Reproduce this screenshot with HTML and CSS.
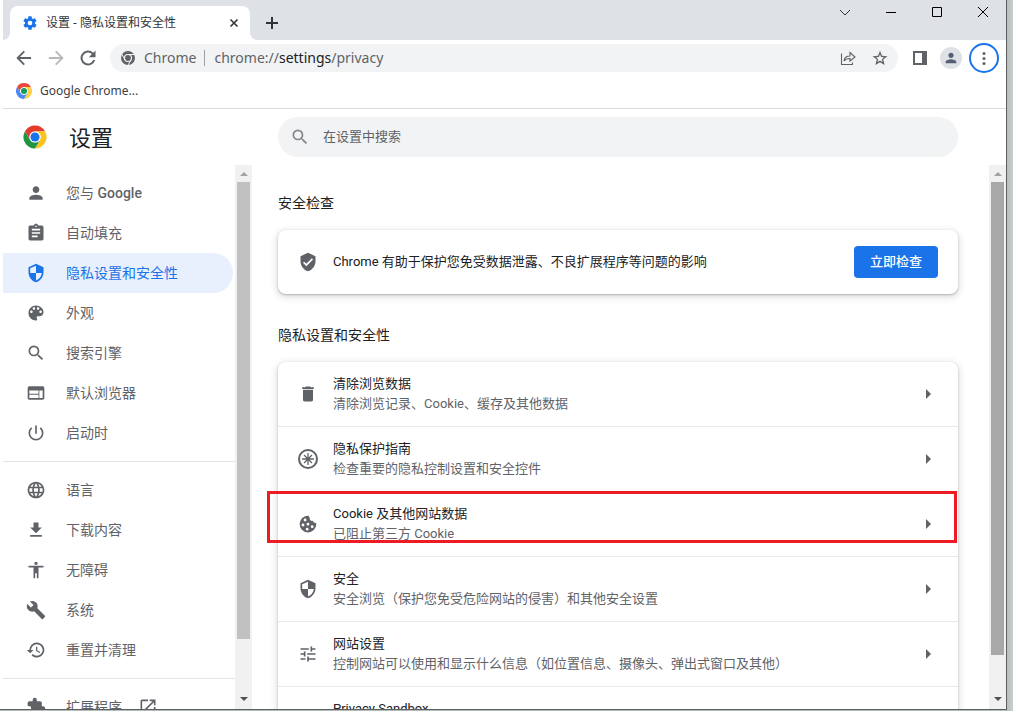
FILE: index.html
```html
<!DOCTYPE html>
<html lang="zh-CN">
<head>
<meta charset="utf-8">
<title>设置 - 隐私设置和安全性</title>
<link rel="stylesheet" href="styles.css">
</head>
<body>
<svg class="defs" aria-hidden="true">
  <symbol id="chrome-logo" viewBox="-1 -1 50 50">
    <circle cx="24" cy="24" r="23" fill="#fff"/>
    <path fill="#e33b2e" d="M24 12h20.8A24 24 0 0 0 3.2 12l10.4 18A12 12 0 0 1 24 12z"/>
    <path fill="#fcc31e" d="M34.4 30L24 48A24 24 0 0 0 44.800 12H24a12 12 0 0 1 10.400 18z"/>
    <path fill="#229342" d="M13.600 30L3.200 12A24 24 0 0 0 24 48l10.400-18a12 12 0 0 1-20.800 0z"/>
    <circle cx="24" cy="24" r="9.500" fill="#1a73e8"/>
  </symbol>
  <symbol id="chrome-page" viewBox="0 0 48 48">
    <circle cx="24" cy="24" r="23" fill="#fff"/>
    <path fill="#ea4a3c" d="M24 12h20.800A24 24 0 0 0 3.200 12l10.400 18A12 12 0 0 1 24 12z"/>
    <path fill="#fdd04a" d="M34.400 30L24 48A24 24 0 0 0 44.800 12H24a12 12 0 0 1 10.400 18z"/>
    <path fill="#4a8af4" d="M13.600 30L3.200 12A24 24 0 0 0 24 48l10.400-18a12 12 0 0 1-20.800 0z"/>
    <circle cx="24" cy="24" r="9" fill="#0f9d58"/>
  </symbol>
  <symbol id="person" viewBox="0 0 24 24"><path d="M12 12c2.210 0 4-1.790 4-4s-1.790-4-4-4-4 1.790-4 4 1.790 4 4 4zm0 2c-2.670 0-8 1.340-8 4v2h16v-2c0-2.660-5.330-4-8-4z"/></symbol>
  <symbol id="shield" viewBox="0 0 24 24"><path d="M12 1L3 5v6c0 5.550 3.840 10.740 9 12 5.160-1.260 9-6.450 9-12V5l-9-4zm0 10.990h7c-.53 4.120-3.280 7.790-7 8.940V12H5V6.300l7-3.110v8.800z"/></symbol>
  <symbol id="search" viewBox="0 0 24 24"><path d="M15.500 14h-.79l-.28-.27A6.470 6.470 0 0 0 16 9.500 6.500 6.500 0 1 0 9.500 16c1.610 0 3.090-.59 4.230-1.570l.27.28v.79l5 4.990L20.490 19l-4.990-5zm-6 0C7.010 14 5 11.990 5 9.500S7.010 5 9.500 5 14 7.010 14 9.500 11.990 14 9.500 14z"/></symbol>
  <symbol id="arrow" viewBox="0 0 6 10"><path d="M0 0l5 5-5 5z"/></symbol>
</svg>
<div class="window">
  <header class="tabstrip">
    <div class="tab">
      <svg class="icon16 blue" viewBox="0 0 24 24"><path d="M19.430 12.980c.04-.32.07-.64.07-.98s-.03-.66-.07-.98l2.110-1.650a.5.5 0 0 0 .12-.64l-2-3.460a.5.5 0 0 0-.61-.22l-2.490 1a7.300 7.300 0 0 0-1.690-.98l-.38-2.650A.49.49 0 0 0 14 2h-4a.49.49 0 0 0-.49.42l-.38 2.650c-.61.25-1.170.59-1.690.98l-2.490-1a.5.5 0 0 0-.61.22l-2 3.460a.5.5 0 0 0 .12.64l2.110 1.650c-.04.32-.07.65-.07.98s.03.66.07.98l-2.110 1.650a.5.5 0 0 0-.12.640l2 3.460c.12.22.39.3.61.22l2.490-1c.52.4 1.080.73 1.690.98l.38 2.650c.03.24.24.42.49.42h4c.25 0 .46-.18.49-.42l.38-2.650a7.300 7.300 0 0 0 1.690-.98l2.490 1c.23.09.49 0 .61-.22l2-3.460a.5.5 0 0 0-.12-.64l-2.110-1.650zM12 15.500a3.500 3.500 0 1 1 0-7 3.500 3.500 0 0 1 0 7z"/></svg>
      <span class="tab-title">设置 - 隐私设置和安全性</span>
      <button class="plain" aria-label="关闭标签页"><svg class="icon12" viewBox="0 0 12 12"><path class="line medium-line" d="M2.500 2.500l7 7m0-7l-7 7"/></svg></button>
    </div>
    <button class="plain newtab" aria-label="新标签页"><svg class="icon12" viewBox="0 0 12 12"><path class="line thick" d="M6 0v12M0 6h12"/></svg></button>
    <div class="controls">
      <button class="plain" aria-label="搜索标签页"><svg class="icon12" viewBox="0 0 12 12"><path class="line" d="M1 4l5 5 5-5"/></svg></button>
      <button class="plain" aria-label="最小化"><svg class="icon12" viewBox="0 0 12 12"><path class="line black" d="M1 6.500h10"/></svg></button>
      <button class="plain" aria-label="最大化"><svg class="icon12" viewBox="0 0 12 12"><path class="line black" d="M1.500 1.500h9v9h-9z"/></svg></button>
      <button class="plain" aria-label="关闭"><svg class="icon12" viewBox="0 0 12 12"><path class="line black" d="M1 1l10 10m0-10L1 11"/></svg></button>
    </div>
  </header>

  <div class="toolbar">
    <button class="plain" aria-label="后退"><svg class="icon20" viewBox="0 0 24 24"><path d="M20.500 10.800H7.200l5.900-5.900L11.500 3.300 2.800 12l8.700 8.700 1.600-1.600-5.900-5.900h13.300z"/></svg></button>
    <button class="plain faint" aria-label="前进"><svg class="icon20" viewBox="0 0 24 24"><path d="M3.500 10.800h13.300l-5.900-5.900 1.600-1.600 8.700 8.700-8.700 8.700-1.600-1.600 5.900-5.900H3.500z"/></svg></button>
    <button class="plain" aria-label="重新加载"><svg class="icon20" viewBox="0 0 24 24"><path d="M18.400 5.600A9 9 0 1 0 20.700 14.500h-2.500a6.600 6.600 0 1 1-1.500-7.200L13 11h8V3z"/></svg></button>
    <div class="omnibox">
      <svg class="icon16" viewBox="0 0 48 48"><circle cx="24" cy="24" r="21"/><circle cx="24" cy="24" r="10.500" fill="none" stroke="#f1f3f4" stroke-width="3.500"/><path fill="none" stroke="#f1f3f4" stroke-width="3" d="M24 13.500h20M14.900 29.300L5 12M33.100 29.300L23 47"/></svg>
      <span class="scheme">Chrome</span>
      <span class="url">chrome://<b>settings</b>/privacy</span>
      <button class="plain" aria-label="分享"><svg class="icon16" viewBox="0 0 16 16"><path class="line soft" d="M1.500 3.500v11h11v-2M4 11c.5-3.500 3-5 6-5V2.500L15 7l-5 4V8.500c-2.500 0-4.500.5-6 2.500z"/></svg></button>
      <button class="plain" aria-label="添加书签"><svg class="icon16" viewBox="0 0 24 24"><path d="M23 9.200l-8-.7L12 1 9 8.500l-8 .7 6.100 5.200L5.200 22.500 12 18.200l6.800 4.300-1.900-8.100zM12 15.800l-3.800 2.300 1-4.300-3.300-2.900 4.400-.4L12 6.500l1.700 4 4.400.4-3.300 2.900 1 4.300z"/></svg></button>
    </div>
    <button class="plain" aria-label="侧边栏"><svg class="icon16" viewBox="0 0 16 16"><path fill-rule="evenodd" d="M1 1h14v14H1zM3 3v10h7V3z"/></svg></button>
    <button class="plain avatar" aria-label="个人资料"><svg class="icon16" viewBox="0 0 24 24"><use href="#person"/></svg></button>
    <button class="plain menu" aria-label="菜单"><svg class="icon16" viewBox="0 0 16 16"><circle cx="8" cy="3.500" r="1.500"/><circle cx="8" cy="8.500" r="1.500"/><circle cx="8" cy="13.500" r="1.500"/></svg></button>
  </div>

  <div class="bookmarks">
    <a href="#chrome"><svg class="icon16"><use href="#chrome-page"/></svg>Google Chrome...</a>
  </div>

  <div class="pagehead">
    <div class="brand"><svg class="icon24"><use href="#chrome-logo"/></svg><h1>设置</h1></div>
    <div class="searchwrap">
      <label class="searchbox"><svg class="icon20"><use href="#search"/></svg><input type="search" placeholder="在设置中搜索" aria-label="在设置中搜索"></label>
    </div>
  </div>

  <div class="content">
    <div class="side">
      <nav class="nav">
        <a href="#people"><svg class="icon20"><use href="#person"/></svg><span>您与 <span class="medium">Google</span></span></a>
        <a href="#autofill"><svg class="icon20" viewBox="0 0 24 24"><path d="M19 3h-4.180C14.400 1.840 13.300 1 12 1c-1.300 0-2.400.84-2.820 2H5c-1.100 0-2 .9-2 2v14c0 1.100.9 2 2 2h14c1.100 0 2-.9 2-2V5c0-1.100-.9-2-2-2zm-7 0c.55 0 1 .45 1 1s-.45 1-1 1-1-.45-1-1 .45-1 1-1zm2 14H7v-2h7v2zm3-4H7v-2h10v2zm0-4H7V7h10v2z"/></svg>自动填充</a>
        <a href="#privacy" class="active" aria-current="page"><svg class="icon20"><use href="#shield"/></svg>隐私设置和安全性</a>
        <a href="#appearance"><svg class="icon20" viewBox="0 0 24 24"><path d="M12 3c-4.970 0-9 4.030-9 9s4.030 9 9 9c.83 0 1.500-.67 1.500-1.500 0-.39-.15-.74-.39-1.010-.23-.26-.38-.61-.38-.99 0-.83.67-1.500 1.500-1.500H16c2.760 0 5-2.240 5-5 0-4.420-4.030-8-9-8zm-5.500 9c-.83 0-1.500-.67-1.500-1.500S5.670 9 6.500 9 8 9.670 8 10.500 7.330 12 6.500 12zm3-4C8.670 8 8 7.330 8 6.500S8.670 5 9.500 5s1.500.67 1.500 1.500S10.330 8 9.500 8zm5 0c-.83 0-1.500-.67-1.500-1.500S13.670 5 14.500 5s1.500.67 1.500 1.500S15.330 8 14.500 8zm3 4c-.83 0-1.500-.67-1.500-1.500S16.670 9 17.500 9s1.500.67 1.500 1.500-.67 1.500-1.500 1.500z"/></svg>外观</a>
        <a href="#search-engine"><svg class="icon20"><use href="#search"/></svg>搜索引擎</a>
        <a href="#default-browser"><svg class="icon20" viewBox="0 0 24 24"><path d="M20 4H4c-1.100 0-1.990.9-1.990 2L2 18c0 1.100.9 2 2 2h16c1.100 0 2-.9 2-2V6c0-1.100-.9-2-2-2zm-5 14H4v-4h11v4zm0-5H4V9h11v4zm5 5h-4V9h4v9z"/></svg>默认浏览器</a>
        <a href="#startup"><svg class="icon20" viewBox="0 0 24 24"><path d="M13 3h-2v10h2V3zm4.830 2.170l-1.420 1.420A6.920 6.920 0 0 1 19 12a7 7 0 1 1-11.420-5.420L6.170 5.170A8.930 8.930 0 0 0 3 12a9 9 0 0 0 18 0c0-2.740-1.230-5.180-3.170-6.830z"/></svg>启动时</a>
        <hr>
        <a href="#languages"><svg class="icon20" viewBox="0 0 24 24"><path d="M11.990 2C6.470 2 2 6.480 2 12s4.470 10 9.990 10C17.520 22 22 17.520 22 12S17.520 2 11.990 2zm6.930 6h-2.950a15.650 15.650 0 0 0-1.380-3.560A8.030 8.030 0 0 1 18.920 8zM12 4.040c.83 1.200 1.480 2.530 1.910 3.960h-3.820c.43-1.430 1.080-2.760 1.910-3.960zM4.260 14C4.100 13.360 4 12.690 4 12s.1-1.360.26-2h3.380c-.08.66-.14 1.320-.14 2s.06 1.340.14 2H4.260zm.82 2h2.950c.32 1.250.78 2.450 1.380 3.560A7.990 7.990 0 0 1 5.080 16zm2.950-8H5.080a7.990 7.990 0 0 1 4.330-3.560A15.650 15.650 0 0 0 8.030 8zM12 19.960c-.83-1.200-1.480-2.530-1.910-3.960h3.820c-.43 1.430-1.080 2.760-1.910 3.960zM14.340 14H9.660c-.09-.66-.16-1.320-.16-2s.07-1.350.16-2h4.680c.09.65.16 1.320.16 2s-.07 1.340-.16 2zm.25 5.560c.6-1.110 1.060-2.310 1.380-3.560h2.950a8.030 8.030 0 0 1-4.330 3.560zM16.360 14c.08-.66.14-1.320.14-2s-.06-1.340-.14-2h3.380c.16.640.26 1.310.26 2s-.1 1.360-.26 2h-3.380z"/></svg>语言</a>
        <a href="#downloads"><svg class="icon20" viewBox="0 0 24 24"><path d="M19 9h-4V3H9v6H5l7 7 7-7zM5 18v2h14v-2H5z"/></svg>下载内容</a>
        <a href="#accessibility"><svg class="icon20" viewBox="0 0 24 24"><path d="M12 2c1.100 0 2 .9 2 2s-.9 2-2 2-2-.9-2-2 .9-2 2-2zm9 7h-6v13h-2v-6h-2v6H9V9H3V7h18v2z"/></svg>无障碍</a>
        <a href="#system"><svg class="icon20" viewBox="0 0 24 24"><path d="M22.700 19l-9.100-9.100c.9-2.300.4-5-1.500-6.900-2-2-5-2.400-7.400-1.300L9 6 6 9 1.600 4.700C.4 7.100.9 10.100 2.900 12.100c1.900 1.900 4.600 2.400 6.900 1.500l9.100 9.100c.4.4 1 .4 1.400 0l2.300-2.300c.5-.4.500-1.100.1-1.400z"/></svg>系统</a>
        <a href="#reset"><svg class="icon20" viewBox="0 0 24 24"><path d="M13 3a9 9 0 0 0-9 9H1l3.890 3.890.07.14L9 12H6a7 7 0 1 1 7 7 6.980 6.980 0 0 1-4.940-2.060l-1.420 1.420A9 9 0 1 0 13 3zm-1 5v5l4.280 2.540.72-1.210-3.500-2.080V8H12z"/></svg>重置并清理</a>
        <hr>
        <a href="#extensions"><svg class="icon20" viewBox="0 0 24 24"><path d="M20.500 11H19V7c0-1.100-.9-2-2-2h-4V3.500a2.500 2.500 0 0 0-5 0V5H4c-1.100 0-1.990.9-1.990 2v3.800H3.500a2.700 2.700 0 0 1 0 5.400H2V20c0 1.100.9 2 2 2h3.800v-1.500a2.700 2.700 0 0 1 5.400 0V22H17c1.100 0 2-.9 2-2v-4h1.500a2.500 2.500 0 0 0 0-5z"/></svg><span class="external">扩展程序<svg class="icon20" viewBox="0 0 24 24"><path d="M19 19H5V5h7V3H5a2 2 0 0 0-2 2v14a2 2 0 0 0 2 2h14c1.100 0 2-.9 2-2v-7h-2v7zM14 3v2h3.590l-9.830 9.830 1.410 1.410L19 6.410V10h2V3h-7z"/></svg></span></a>
      </nav>
      <div class="scrollbar light" aria-hidden="true"><i class="up"></i><b class="thumb"></b><i class="down"></i></div>
    </div>

    <div class="mainwrap">
      <main class="main">
        <h2>安全检查</h2>
        <section class="card">
          <div class="row">
            <svg class="icon20" viewBox="0 0 24 24"><path d="M12 1L3 5v6c0 5.550 3.840 10.740 9 12 5.160-1.260 9-6.450 9-12V5l-9-4zm-2 16l-4-4 1.410-1.410L10 14.170l6.590-6.590L18 9l-8 8z"/></svg>
            <div class="text">Chrome 有助于保护您免受数据泄露、不良扩展程序等问题的影响</div>
            <button class="primary">立即检查</button>
          </div>
        </section>
        <h2>隐私设置和安全性</h2>
        <section class="card">
          <a class="row" href="#clear">
            <svg class="icon20" viewBox="0 0 24 24"><path d="M6 19c0 1.100.9 2 2 2h8c1.100 0 2-.9 2-2V7H6v12zM19 4h-3.500l-1-1h-5l-1 1H5v2h14V4z"/></svg>
            <div class="text">清除浏览数据<small>清除浏览记录、Cookie、缓存及其他数据</small></div>
            <svg class="arrow"><use href="#arrow"/></svg>
          </a>
          <a class="row" href="#guide">
            <svg class="icon20" viewBox="0 0 20 20"><circle class="ring" cx="10" cy="10" r="9"/><path class="spokes" d="M10 4v12M4 10h12M6 6l8 8M14 6l-8 8"/><circle cx="10" cy="10" r="1.500"/></svg>
            <div class="text">隐私保护指南<small>检查重要的隐私控制设置和安全控件</small></div>
            <svg class="arrow"><use href="#arrow"/></svg>
          </a>
          <a class="row marked" href="#cookies">
            <svg class="icon20" viewBox="0 0 24 24"><path fill-rule="evenodd" d="M21.600 10.500a3 3 0 0 1-3.700-2.400 3 3 0 0 1-3.800-3.700 3 3 0 0 1-1.300-2.300A10 10 0 1 0 21.950 12a4 4 0 0 0-.35-1.500zM8.500 5.500a1.700 1.700 0 1 1 0 3.400 1.700 1.700 0 0 1 0-3.400zM6 11.500a1.700 1.700 0 1 1 0 3.400 1.700 1.700 0 0 1 0-3.400zm6-1a1.700 1.700 0 1 1 0 3.400 1.700 1.700 0 0 1 0-3.400zm-1 6a1.700 1.700 0 1 1 0 3.400 1.700 1.700 0 0 1 0-3.400zm6-3a1.700 1.700 0 1 1 0 3.400 1.700 1.700 0 0 1 0-3.400z"/></svg>
            <div class="text">Cookie 及其他网站数据<small>已阻止第三方 Cookie</small></div>
            <svg class="arrow"><use href="#arrow"/></svg>
          </a>
          <a class="row" href="#security">
            <svg class="icon20"><use href="#shield"/></svg>
            <div class="text">安全<small>安全浏览（保护您免受危险网站的侵害）和其他安全设置</small></div>
            <svg class="arrow"><use href="#arrow"/></svg>
          </a>
          <a class="row" href="#site">
            <svg class="icon20" viewBox="0 0 24 24"><path d="M3 17v2h6v-2H3zM3 5v2h10V5H3zm10 16v-2h8v-2h-8v-2h-2v6h2zM7 9v2H3v2h4v2h2V9H7zm14 4v-2H11v2h10zm-6-4h2V7h4V5h-4V3h-2v6z"/></svg>
            <div class="text">网站设置<small>控制网站可以使用和显示什么信息（如位置信息、摄像头、弹出式窗口及其他）</small></div>
            <svg class="arrow"><use href="#arrow"/></svg>
          </a>
          <a class="row last" href="#sandbox">
            <div class="text">Privacy Sandbox</div>
          </a>
        </section>
      </main>
      <div class="scrollbar" aria-hidden="true"><i class="up"></i><b class="thumb"></b><i class="down"></i></div>
    </div>
  </div>
</div>
</body>
</html>
```
FILE: styles.css
```css
*, *::before, *::after { box-sizing: border-box; }

body {
  margin: 0;
  height: 100vh;
  padding: 0 6px 1px 0;
  overflow: hidden;
  background: linear-gradient(to left, #c9d1d0, #b4bcbb 7px);
  font-family: Roboto, "Noto Sans CJK SC", sans-serif;
  font-size: 13px;
  line-height: 20px;
  color: #202124;
}

.defs { position: absolute; width: 0; height: 0; }
svg { display: block; flex: none; fill: currentColor; }
a { color: inherit; text-decoration: none; }
.icon12 { width: 12px; height: 12px; }
.icon16 { width: 16px; height: 16px; }
.icon20 { width: 20px; height: 20px; }
.icon24 { width: 24px; height: 24px; }
.blue { color: #1a73e8; }
.line { fill: none; stroke: currentColor; stroke-width: 1; }
.thick { stroke-width: 2; }
.medium-line { stroke-width: 1.6; }
.soft { stroke-width: 1.1; }
.black { stroke: #000; }
.ring { fill: none; stroke: currentColor; stroke-width: 2; }
.spokes { fill: none; stroke: currentColor; stroke-width: 1.3; }

.plain {
  display: flex;
  align-items: center;
  justify-content: center;
  padding: 0;
  border: 0;
  background: none;
  color: inherit;
}

.window {
  display: flex;
  flex-direction: column;
  height: 100%;
  padding-left: 3px;
  background: #fff;
  border: solid #5c6060;
  border-width: 0 1px 1px 0;
}

/* Tab strip */
.tabstrip {
  display: flex;
  align-items: flex-start;
  height: 40px;
  padding-left: 7px;
  background: #dee1e6;
  color: #303438;
}
.tab {
  position: relative;
  display: flex;
  align-items: center;
  gap: 8px;
  width: 240px;
  height: 34px;
  margin-top: 6px;
  padding: 0 10px 0 12px;
  border-radius: 8px 8px 0 0;
  background: #fff;
  font-family: "Noto Sans", "Noto Sans CJK SC", sans-serif;
  font-size: 12px;
}
.tab::before, .tab::after {
  content: "";
  position: absolute;
  bottom: 0;
  width: 8px;
  height: 8px;
}
.tab::before { right: 100%; background: radial-gradient(circle at 0 0, transparent 8px, #fff 8px); }
.tab::after { left: 100%; background: radial-gradient(circle at 100% 0, transparent 8px, #fff 8px); }
.tab-title { flex: 1; }
.newtab { margin: 17px 0 0 16px; }
.controls { display: flex; margin-left: auto; }
.controls .plain { width: 46px; height: 24px; }

/* Toolbar */
.toolbar {
  display: flex;
  align-items: center;
  height: 36px;
  padding: 0 7px 0 11px;
  gap: 12px;
  color: #5f6368;
}
.faint { opacity: 0.45; }
.omnibox {
  flex: 1;
  display: flex;
  align-items: center;
  height: 28px;
  margin-right: 2px;
  padding: 0 10px;
  border-radius: 14px;
  background: #f1f3f4;
  font-family: "Noto Sans", sans-serif;
  font-size: 14px;
}
.scheme { padding: 0 8px; }
.url { flex: 1; padding-left: 9px; line-height: 16px; border-left: 1px solid #9aa0a6; }
.url b { font-weight: 400; color: #202124; }
.omnibox .plain + .plain { margin-left: 16px; }
.avatar { width: 22px; height: 22px; border-radius: 50%; background: #dee1e6; color: #566074; }
.menu { width: 30px; height: 30px; margin-left: -5px; border: 2px solid #1a73e8; border-radius: 50%; }

.bookmarks {
  display: flex;
  height: 33px;
  padding: 0 13px 3px;
  border-bottom: 1px solid #dcdcdc;
  font-family: "Noto Sans", sans-serif;
  font-size: 12px;
  color: #3c4043;
}
.bookmarks a { display: flex; align-items: center; gap: 8px; }

/* Settings header */
.pagehead { display: flex; height: 56px; }
.brand { display: flex; align-items: center; gap: 22px; width: 249px; padding-left: 20px; }
h1 { margin: 0; padding-top: 4px; font-size: 22px; font-weight: 400; line-height: 28px; }
.searchwrap { flex: 1; padding: 8px 48px 8px 26px; }
.searchbox {
  display: flex;
  align-items: center;
  gap: 13px;
  height: 40px;
  padding: 0 12px;
  border-radius: 20px;
  background: #f1f3f4;
  color: #80868b;
}
.searchbox input {
  flex: 1;
  padding: 0;
  border: 0;
  outline: 0;
  background: none;
  font: inherit;
}
.searchbox input::placeholder { color: #5f6368; }

/* Content */
.content { flex: 1; display: flex; min-height: 0; }
.side { display: flex; width: 249px; }
.mainwrap { flex: 1; display: flex; min-width: 0; }

.nav { flex: 1; overflow: hidden; padding-top: 8px; font-size: 14px; color: #5f6368; }
.nav a {
  display: flex;
  align-items: center;
  gap: 20px;
  height: 40px;
  margin-right: 2px;
  padding-left: 23px;
  border-radius: 0 20px 20px 0;
}
.nav .active { background: #e8f0fe; color: #1a73e8; }
.nav hr { height: 1px; margin: 8px 0; border: 0; background: #e4e5e7; }
.medium { font-weight: 500; }
.external { display: flex; align-items: center; gap: 16px; }

.scrollbar {
  display: flex;
  flex-direction: column;
  align-items: center;
  width: 17px;
  background: #f1f1f1;
}
.scrollbar i { border: solid transparent; border-width: 0 4px; }
.up { margin: 7px 0 6px; }
.scrollbar .up { border-bottom: 4px solid #a3a3a3; }
.scrollbar .down { margin: auto 0 8px; border-top: 4px solid #505050; }
.thumb { width: 13px; height: 87%; background: #a8a8a8; }
.light .thumb { height: 84%; background: #c1c1c1; }

.main { flex: 1; overflow: hidden; padding: 0 31px 0 26px; }
h2 { margin: 28px 0 17px; font-size: 14px; font-weight: 400; line-height: 20px; }
.card {
  margin-bottom: 31px;
  border-radius: 8px;
  background: #fff;
  box-shadow: 0 1px 2px rgba(60, 64, 67, 0.3), 0 2px 6px 2px rgba(60, 64, 67, 0.15);
}
.row {
  position: relative;
  display: flex;
  align-items: center;
  min-height: 64px;
  padding: 12px 20px;
  gap: 15px;
}
.row + .row { min-height: 65px; border-top: 1px solid #e8eaed; }
.row.last { align-items: flex-start; padding-left: 55px; }
.row svg { color: #5f6368; }
.text { flex: 1; }
.text small { display: block; font-size: 13px; color: #5f6368; }
.row .arrow { width: 6px; height: 10px; margin-right: 6px; }
.primary {
  height: 32px;
  padding: 0 16px;
  border: 0;
  border-radius: 4px;
  background: #1a73e8;
  color: #fff;
  font: inherit;
  font-weight: 500;
}
.marked::after {
  content: "";
  position: absolute;
  top: -1px;
  left: -11px;
  right: 1px;
  height: 52px;
  border: 3px solid #ed1c24;
}
```
